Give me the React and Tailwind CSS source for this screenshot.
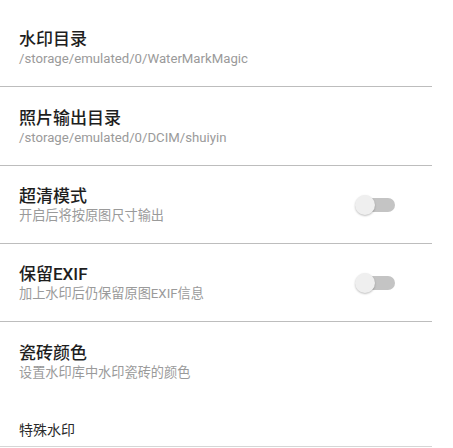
import React from "react";

const font = { fontFamily: '"Roboto", "Noto Sans CJK SC", sans-serif' };

function Toggle() {
  return (
    <div className="relative w-[40px] h-[20px] shrink-0">
      <div className="absolute left-[7px] top-[3px] w-[33px] h-[14px] rounded-full bg-[#c4c4c4]" />
      <div className="absolute left-0 top-0 w-[20px] h-[20px] rounded-full bg-[#efefef] shadow-[0_1px_2px_rgba(0,0,0,0.25)]" />
    </div>
  );
}

function Row({ title, subtitle, toggle, h }) {
  return (
    <div className={`flex items-center justify-between border-b border-[#bdbdbd] pl-[19px] pr-[37px] ${h}`}>
      <div className="flex flex-col">
        <div className="text-[17px] leading-[22px] font-medium text-[#1e1e1e]">{title}</div>
        <div className="text-[13.2px] leading-[16px] mt-[1px] text-[#9a9a9a]">{subtitle}</div>
      </div>
      {toggle && <Toggle />}
    </div>
  );
}

export default function App() {
  return (
    <div className="w-[453px] h-[448px] bg-white overflow-hidden" style={font}>
      <div className="w-[432px] pt-[8px]">
        <Row h="h-[79px]" title="水印目录" subtitle="/storage/emulated/0/WaterMarkMagic" />
        <Row h="h-[79px]" title="照片输出目录" subtitle="/storage/emulated/0/DCIM/shuiyin" />
        <Row h="h-[78px]" title="超清模式" subtitle="开启后将按原图尺寸输出" toggle />
        <Row h="h-[78px]" title="保留EXIF" subtitle="加上水印后仍保留原图EXIF信息" toggle />
        <div className="flex items-center pl-[19px] h-[78px]">
          <div className="flex flex-col">
            <div className="text-[17px] leading-[22px] font-medium text-[#1e1e1e]">瓷砖颜色</div>
            <div className="text-[13.2px] leading-[16px] mt-[1px] text-[#9a9a9a]">设置水印库中水印瓷砖的颜色</div>
          </div>
        </div>
        <div className="pl-[19px] pt-[20px] pb-[6px] border-b border-[#d6d6d6]">
          <div className="text-[14px] leading-[20px] text-[#2a2a2a]">特殊水印</div>
        </div>
      </div>
    </div>
  );
}
